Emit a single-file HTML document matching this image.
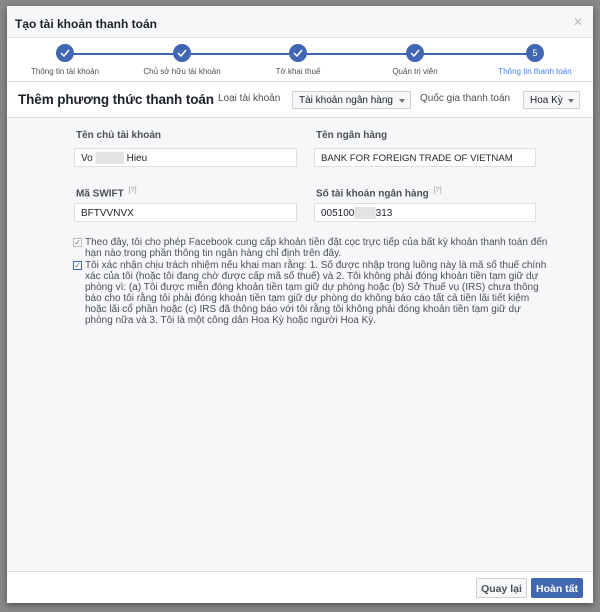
<!DOCTYPE html>
<html><head><meta charset="utf-8"><style>
*{box-sizing:border-box;margin:0;padding:0}
body{width:600px;height:612px;background:#878787;font-family:"Liberation Sans",Helvetica,Arial,sans-serif;position:relative;overflow:hidden;color:#1d2129}
.dlg{position:absolute;left:7px;top:6px;width:586px;height:597px;background:#fff;box-shadow:0 2px 6px rgba(0,0,0,.4)}
.hdr{height:32px;background:#f6f7f9;border-bottom:1px solid #e5e5e5;font-weight:bold;font-size:12px;padding:11px 0 0 8px;position:relative}
.x{position:absolute;right:10px;top:9px;color:#bbb;font-size:12px;font-weight:normal}
.steps{position:relative;height:44px;border-bottom:1px solid #ddd}
.line{position:absolute;left:58px;top:15px;width:470px;height:2px;background:#4267b2}
.c{position:absolute;top:6px;width:18px;height:18px;border-radius:50%;background:#4267b2;color:#fff;font-size:9px;text-align:center;line-height:18px}
.c svg{position:absolute;left:4px;top:5px}
.lb{position:absolute;top:29px;font-size:8px;color:#4b4f56;white-space:nowrap;transform:translateX(-50%)}
.tb{height:36px;border-bottom:1px solid #ddd;position:relative}
.tb .t{position:absolute;left:11px;top:10px;font-size:13.5px;font-weight:bold;letter-spacing:-0.1px}
.sel{position:absolute;top:9px;height:18px;border:1px solid #ccd0d5;background:#f6f7f9;font-size:10px;color:#1d2129;padding:3px 0 0 6px;white-space:nowrap}
.sel:after{content:"";position:absolute;right:5px;top:7px;border:3px solid transparent;border-top:4px solid #777}
.gl{position:absolute;top:11px;font-size:10px;color:#4b4f56}
.body{position:absolute;top:112px;left:0;right:0;height:454px;background:#f6f7f9;border-bottom:1px solid #ddd}
.lab{position:absolute;font-size:10px;font-weight:bold;color:#4b4f56}
.lab sup{font-weight:normal;color:#999;font-size:7px;margin-left:5px}
.in{position:absolute;height:19px;width:223px;background:#fff;border:1px solid #dddfe2;font-size:10px;padding:4px 0 0 6px;color:#1d2129;white-space:nowrap}
.chk{position:absolute;left:66px;font-size:10px;color:#4b4f56;line-height:11px;width:476px;padding-left:12px}
.chk .b{position:absolute;left:0;top:1px;width:9px;height:9px;border:1px solid #bbb;background:#fff;font-size:8px;line-height:7px;color:#666;text-align:center}
.btn{position:absolute;top:578px;height:20px;font-size:10.5px;font-weight:bold;padding:4px 0 0;text-align:center;border-radius:2px}
</style></head><body>
<div class="dlg">
<div class="hdr">Tạo tài khoản thanh toán<span class="x">✕</span></div>
<div class="steps">
<div class="line"></div>
<div class="c" style="left:49px"><svg width="10" height="8"><path d="M1 4l3 3 5-6" stroke="#fff" stroke-width="1.5" fill="none"/></svg></div>
<div class="c" style="left:166px"><svg width="10" height="8"><path d="M1 4l3 3 5-6" stroke="#fff" stroke-width="1.5" fill="none"/></svg></div>
<div class="c" style="left:282px"><svg width="10" height="8"><path d="M1 4l3 3 5-6" stroke="#fff" stroke-width="1.5" fill="none"/></svg></div>
<div class="c" style="left:399px"><svg width="10" height="8"><path d="M1 4l3 3 5-6" stroke="#fff" stroke-width="1.5" fill="none"/></svg></div>
<div class="c" style="left:519px">5</div>
<div class="lb" style="left:58px">Thông tin tài khoản</div>
<div class="lb" style="left:175px">Chủ sở hữu tài khoản</div>
<div class="lb" style="left:291px">Tờ khai thuế</div>
<div class="lb" style="left:408px">Quản trị viên</div>
<div class="lb" style="left:528px;color:#4080ff">Thông tin thanh toán</div>
</div>
<div class="tb">
<div class="t">Thêm phương thức thanh toán</div>
<div class="gl" style="left:211px">Loại tài khoản</div>
<div class="sel" style="left:285px;width:119px">Tài khoản ngân hàng</div>
<div class="gl" style="left:413px">Quốc gia thanh toán</div>
<div class="sel" style="left:516px;width:57px">Hoa Kỳ</div>
</div>
<div class="body">
<div class="lab" style="left:69px;top:12px">Tên chủ tài khoản</div>
<div class="lab" style="left:309px;top:12px">Tên ngân hàng</div>
<div class="in" style="left:67px;top:30px">Vo <span style="color:#e3e3e3">████</span> Hieu</div>
<div class="in" style="left:307px;top:30px;width:222px;font-size:9.6px">BANK FOR FOREIGN TRADE OF VIETNAM</div>
<div class="lab" style="left:69px;top:69px">Mã SWIFT<sup>[?]</sup></div>
<div class="lab" style="left:309px;top:69px">Số tài khoản ngân hàng<sup>[?]</sup></div>
<div class="in" style="left:67px;top:85px">BFTVVNVX</div>
<div class="in" style="left:307px;top:85px;width:222px">005100<span style="color:#e3e3e3">███</span>313</div>
<div class="chk" style="top:119px"><span class="b">✓</span>Theo đây, tôi cho phép Facebook cung cấp khoản tiền đặt cọc trực tiếp của bất kỳ khoản thanh toán đến hạn nào trong phần thông tin ngân hàng chỉ định trên đây.</div>
<div class="chk" style="top:142px"><span class="b" style="border-color:#4267b2">✓</span>Tôi xác nhận chịu trách nhiệm nếu khai man rằng: 1. Số được nhập trong luồng này là mã số thuế chính xác của tôi (hoặc tôi đang chờ được cấp mã số thuế) và 2. Tôi không phải đóng khoản tiền tạm giữ dự phòng vì: (a) Tôi được miễn đóng khoản tiền tạm giữ dự phòng hoặc (b) Sở Thuế vụ (IRS) chưa thông báo cho tôi rằng tôi phải đóng khoản tiền tạm giữ dự phòng do không báo cáo tất cả tiền lãi tiết kiệm hoặc lãi cổ phần hoặc (c) IRS đã thông báo với tôi rằng tôi không phải đóng khoản tiền tạm giữ dự phòng nữa và 3. Tôi là một công dân Hoa Kỳ hoặc người Hoa Kỳ.</div>
</div>
</div>
<div class="btn" style="left:476px;width:51px;background:#f6f7f9;border:1px solid #ccd0d5;color:#4b4f56">Quay lại</div>
<div class="btn" style="left:531px;width:52px;background:#4267b2;border:1px solid #4267b2;color:#fff">Hoàn tất</div>
</body></html>
